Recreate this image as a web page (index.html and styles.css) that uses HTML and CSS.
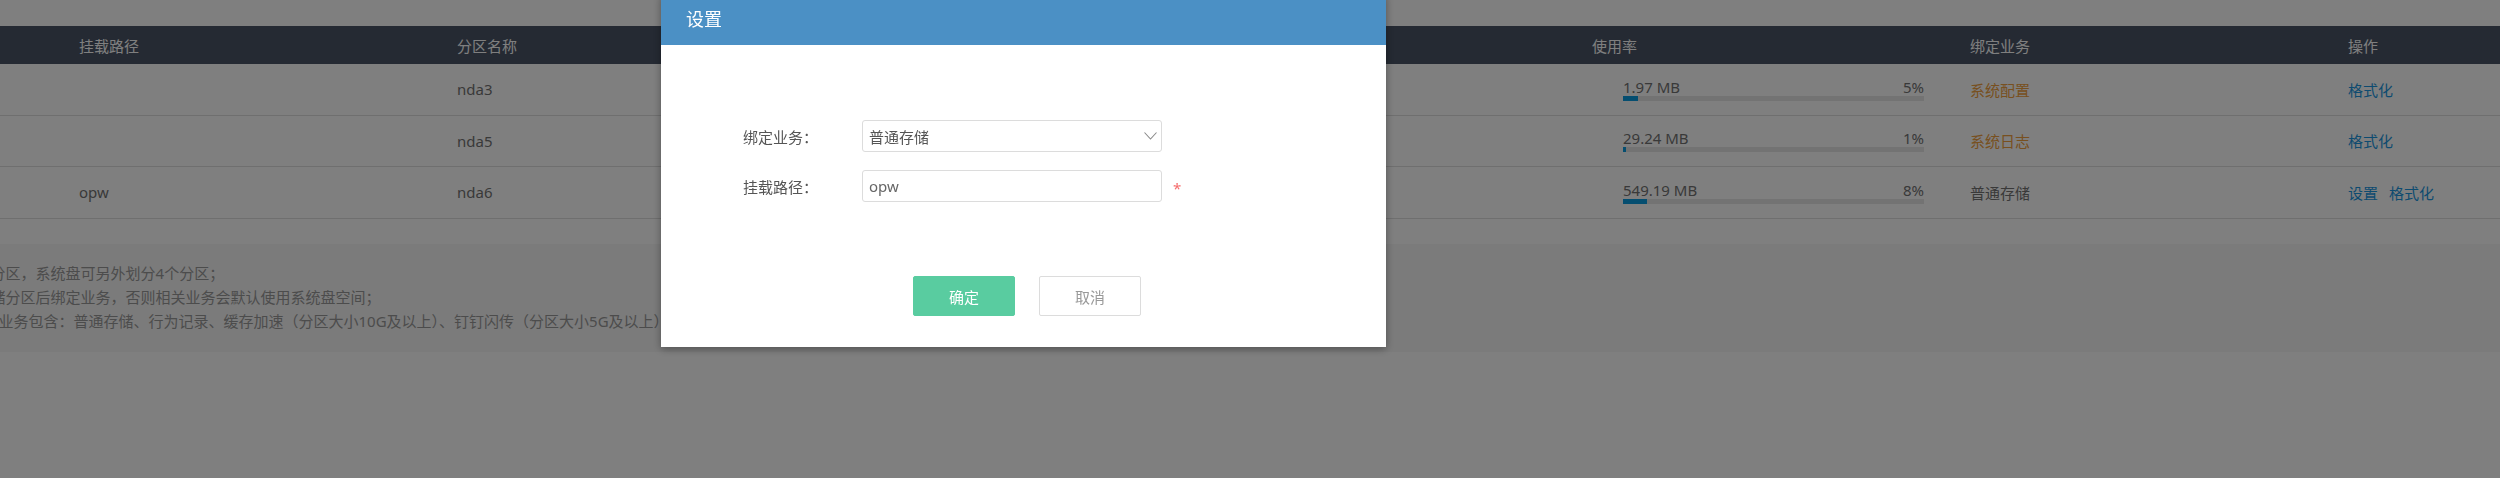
FILE: index.html
```html
<!DOCTYPE html>
<html lang="zh-CN">
<head>
<meta charset="utf-8">
<title>分区管理</title>
<link rel="stylesheet" href="styles.css">
</head>
<body>
<div class="page">
  <div class="table">
    <div class="grid thead">
      <div class="cell"></div>
      <div class="cell">挂载路径</div>
      <div class="cell">分区名称</div>
      <div class="cell">使用率</div>
      <div class="cell">绑定业务</div>
      <div class="cell">操作</div>
    </div>
    <div class="grid trow">
      <div class="cell"></div>
      <div class="cell"></div>
      <div class="cell">nda3</div>
      <div class="cell usage">
        <div class="usage-top"><span>1.97 MB</span><span>5%</span></div>
        <div class="bar"><div class="bar-fill" style="width:5%"></div></div>
      </div>
      <div class="cell tag-sys">系统配置</div>
      <div class="cell ops"><span class="link">格式化</span></div>
    </div>
    <div class="grid trow">
      <div class="cell"></div>
      <div class="cell"></div>
      <div class="cell">nda5</div>
      <div class="cell usage">
        <div class="usage-top"><span>29.24 MB</span><span>1%</span></div>
        <div class="bar"><div class="bar-fill" style="width:1%"></div></div>
      </div>
      <div class="cell tag-sys">系统日志</div>
      <div class="cell ops"><span class="link">格式化</span></div>
    </div>
    <div class="grid trow">
      <div class="cell"></div>
      <div class="cell">opw</div>
      <div class="cell">nda6</div>
      <div class="cell usage">
        <div class="usage-top"><span>549.19 MB</span><span>8%</span></div>
        <div class="bar"><div class="bar-fill" style="width:8%"></div></div>
      </div>
      <div class="cell">普通存储</div>
      <div class="cell ops"><span class="link">设置</span><span class="link">格式化</span></div>
    </div>
  </div>
  <div class="notes">
    <p>1、数据盘可分区，系统盘可另外划分4个分区；</p>
    <p>2、先创建存储分区后绑定业务，否则相关业务会默认使用系统盘空间；</p>
    <p>3. 分区可绑定业务包含：普通存储、行为记录、缓存加速（分区大小10G及以上）、钉钉闪传（分区大小5G及以上）；</p>
  </div>
</div>

<div class="mask"></div>

<div class="dialog">
  <div class="dialog-title">设置</div>
  <div class="form">
    <div class="form-row">
      <div class="label">绑定业务：</div>
      <div class="control select">
        <span>普通存储</span>
        <svg class="chev" width="13" height="8" viewBox="0 0 13 8"><polyline points="0.5,0.5 6.5,7 12.5,0.5" fill="none" stroke="#8a8a8a" stroke-width="1.1"/></svg>
      </div>
    </div>
    <div class="form-row">
      <div class="label">挂载路径：</div>
      <input class="control" type="text" value="opw">
      <span class="req">*</span>
    </div>
  </div>
  <div class="footer">
    <button class="btn btn-primary" type="button">确定</button>
    <button class="btn btn-default" type="button">取消</button>
  </div>
</div>
</body>
</html>
```

FILE: styles.css
```css
* { box-sizing: border-box; }
html, body { margin: 0; height: 100%; }
body {
  background: #fff;
  font-family: "Noto Sans", "Noto Sans CJK SC", sans-serif;
  font-size: 15px;
  color: #737373;
  overflow: hidden;
}
.page {
  margin-left: -113px;
  width: 2613px;
  padding-top: 26px;
}
.grid {
  display: grid;
  grid-template-columns: 172px 378px 1135px 378px 378px 172px;
}
.thead {
  height: 38px;
  background: #4a5466;
  color: #fff;
  align-items: center;
}
.cell {
  padding-left: 20px;
  white-space: nowrap;
}
.trow {
  height: 51.5px;
  border-bottom: 1px solid #dedede;
  align-items: center;
}
.usage {
  padding-left: 51px;
  display: flex;
  flex-direction: column;
}
.usage-top {
  width: 301px;
  display: flex;
  justify-content: space-between;
  line-height: 18px;
}
.bar {
  width: 301px;
  height: 5px;
  background: #e6e6e6;
}
.bar-fill {
  height: 100%;
  background: #0a9de0;
}
.tag-sys { color: #f0a040; }
.ops {
  display: flex;
  gap: 11px;
}
.link { color: #1a96e0; }
.notes {
  margin-top: 25px;
  background: #f6f6f6;
  padding: 17px 0 19px 20px;
  line-height: 24px;
  color: #999;
}
.notes p {
  margin: 0;
  white-space: nowrap;
}
.mask {
  position: fixed;
  inset: 0;
  background: rgba(0, 0, 0, 0.5);
}
.dialog {
  position: fixed;
  left: 661px;
  top: -6px;
  width: 725px;
  height: 353px;
  background: #fff;
  box-shadow: 0 2px 8px rgba(0, 0, 0, 0.35);
  display: flex;
  flex-direction: column;
}
.dialog-title {
  height: 51px;
  line-height: 51px;
  background: #4b90c5;
  color: #fff;
  font-size: 18px;
  padding-left: 25px;
}
.form {
  padding: 75px 0 0 82px;
  display: flex;
  flex-direction: column;
  gap: 18px;
}
.form-row {
  display: flex;
  align-items: center;
  height: 32px;
}
.label {
  width: 119px;
  color: #555;
}
.control {
  width: 300px;
  height: 32px;
  border: 1px solid #dcdcdc;
  border-radius: 3px;
  padding: 0 4px 0 6px;
  display: flex;
  align-items: center;
  justify-content: space-between;
  color: #555;
  font: inherit;
  background: #fff;
}
input.control {
  color: #666;
  outline: none;
}
.chev { display: block; }
.req {
  align-self: flex-start;
  margin-top: 8px;
  margin-left: 11px;
  line-height: 20px;
  color: #f56c6c;
}
.footer {
  display: flex;
  justify-content: center;
  gap: 24px;
  padding-top: 74px;
  padding-left: 7px;
}
.btn {
  width: 102px;
  height: 40px;
  border-radius: 2px;
  font: inherit;
  font-size: 15px;
  padding: 0;
}
.btn-primary {
  background: #59cca0;
  color: #fff;
  border: 1px solid #59cca0;
}
.btn-default {
  background: #fff;
  color: #999;
  border: 1px solid #dcdcdc;
}
```
